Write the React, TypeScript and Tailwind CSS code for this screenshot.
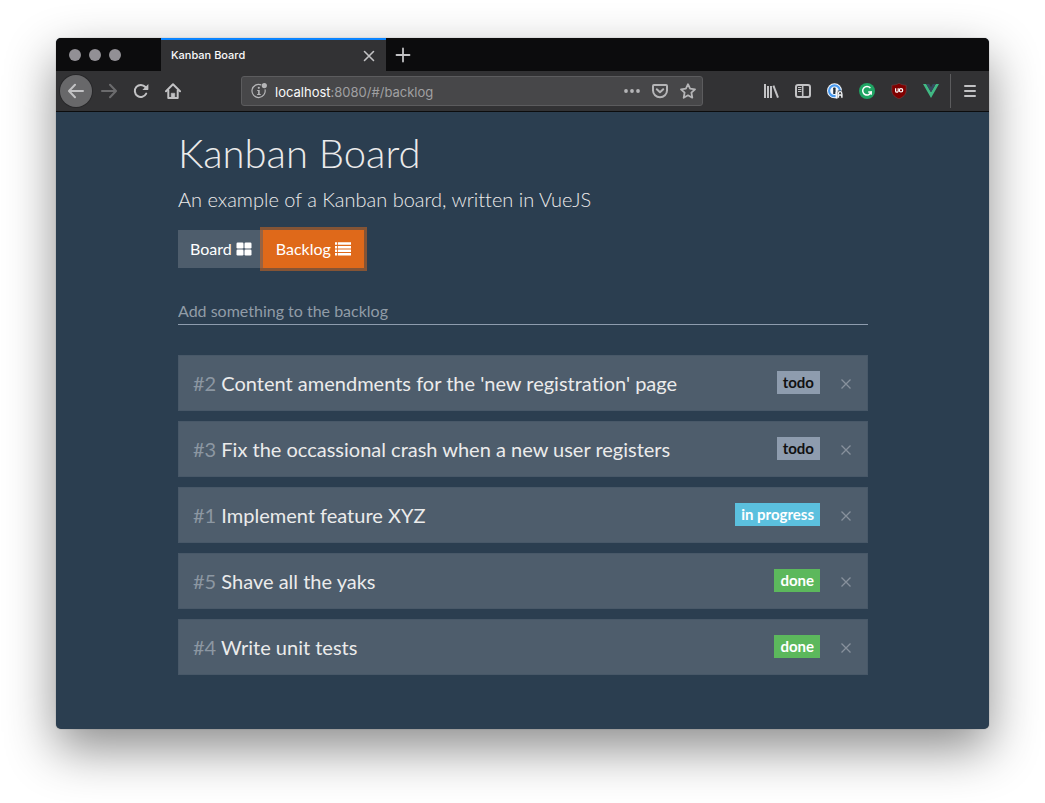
import { useState } from "react";
import type { FormEvent, ReactNode } from "react";

type Status = "todo" | "in progress" | "done";

interface Item {
  id: number;
  text: string;
  status: Status;
}

const initialItems: Item[] = [
  { id: 2, text: "Content amendments for the 'new registration' page", status: "todo" },
  { id: 3, text: "Fix the occassional crash when a new user registers", status: "todo" },
  { id: 1, text: "Implement feature XYZ", status: "in progress" },
  { id: 5, text: "Shave all the yaks", status: "done" },
  { id: 4, text: "Write unit tests", status: "done" },
];

const badgeStyles: Record<Status, string> = {
  todo: "bg-[#8e9cae] text-[#111111]",
  "in progress": "bg-[#5bc0de] text-white",
  done: "bg-[#5cb85c] text-white",
};

function ToolButton({ label, className = "", children }: { label: string; className?: string; children: ReactNode }) {
  return (
    <button
      type="button"
      aria-label={label}
      className={`flex size-8 shrink-0 items-center justify-center rounded-full text-[#c2c2c4] ${className}`}
    >
      {children}
    </button>
  );
}

function ArrowIcon({ flip = false }: { flip?: boolean }) {
  return (
    <svg className={flip ? "size-4 rotate-180" : "size-4"} viewBox="0 0 16 16" fill="none" stroke="currentColor" strokeWidth="2" strokeLinecap="round" strokeLinejoin="round">
      <path d="M15 8H1.5M7 1.8L1 8l6 6.2" />
    </svg>
  );
}

function ReloadIcon() {
  return (
    <svg className="size-4" viewBox="0 0 16 16">
      <path d="M13.2 10.6A6 6 0 1 1 12.4 4" fill="none" stroke="currentColor" strokeWidth="2" strokeLinecap="round" />
      <path d="M15.4 1v5.3a.7.7 0 0 1-.7.7H9.4z" fill="currentColor" />
    </svg>
  );
}

function HomeIcon() {
  return (
    <svg className="size-4" viewBox="0 0 16 16" fill="none" stroke="currentColor" strokeWidth="2" strokeLinecap="round" strokeLinejoin="round">
      <path d="M1 8.2L8 1.2l7 7" />
      <path d="M3.3 7.5V15h9.4V7.5" />
      <path d="M6.2 15v-4.8h3.6V15z" fill="currentColor" strokeWidth="0.5" />
    </svg>
  );
}

function InfoIcon() {
  return (
    <svg className="size-4 shrink-0 text-[#b5b5b7]" viewBox="0 0 16 16">
      <path d="M10.2 1.9A6.6 6.6 0 1 0 14 6.4" fill="none" stroke="currentColor" strokeWidth="1.2" />
      <circle cx="13.3" cy="2.6" r="2.6" fill="currentColor" />
      <circle cx="7.8" cy="4.8" r="1.1" fill="currentColor" />
      <path d="M6.2 7h2.5v4h1v1.1H6.1V11h1V8.1h-.9z" fill="currentColor" />
    </svg>
  );
}

function PocketIcon() {
  return (
    <svg className="size-4" viewBox="0 0 16 16" fill="none" stroke="currentColor" strokeWidth="2" strokeLinecap="round" strokeLinejoin="round">
      <path d="M2 2h12a1 1 0 0 1 1 1v4.5a7 6.7 0 0 1-14 0V3a1 1 0 0 1 1-1z" />
      <path d="M4.8 6.3L8 9.3l3.2-3" />
    </svg>
  );
}

function StarIcon() {
  return (
    <svg className="size-4" viewBox="0 0 16 16" fill="none" stroke="currentColor" strokeWidth="1.8" strokeLinejoin="round">
      <path d="M8 1.2l2.1 4.4 4.9.7-3.6 3.4.9 5L8 12.3l-4.3 2.4.9-5L1 6.3l4.9-.7z" />
    </svg>
  );
}

function LibraryIcon() {
  return (
    <svg className="size-4" viewBox="0 0 16 16" fill="none" stroke="currentColor" strokeWidth="2">
      <path d="M2 1v14M5 3v12M8 3v12" />
      <path d="M10.4 2.6L15 14.6" />
    </svg>
  );
}

function SidebarIcon() {
  return (
    <svg className="size-4" viewBox="0 0 16 16" fill="none" stroke="currentColor">
      <rect x="1" y="2" width="14" height="12" rx="2" strokeWidth="2" />
      <path d="M7.7 2v12" strokeWidth="1.6" />
      <path d="M3 4.500h3.400M3 6.500h3.400M3 8.500h3.400" strokeWidth="1" />
    </svg>
  );
}

function PasswordIcon() {
  return (
    <svg className="size-4" viewBox="0 0 16 16">
      <circle cx="7.5" cy="7.8" r="7.5" fill="#f4f6f8" />
      <circle cx="7.5" cy="7.8" r="5.400" fill="none" stroke="#4a9bf0" strokeWidth="2.200" />
      <rect x="6.200" y="4.600" width="2.400" height="6.400" rx="0.600" fill="#22303c" />
      <path d="M9.600 16V10l1.200-2.600H16V16z" fill="#38383a" />
      <path d="M8.600 9.200l2-1.400v7.600l-2 .4z" fill="#f4f6f8" />
      <path d="M11.400 11.500V10.400a1.700 1.700 0 0 1 3.400 0v1.100" fill="none" stroke="#f4f6f8" strokeWidth="1.300" />
      <path d="M10.600 11.200h5v3.600h-1.500v-2h-2v2h-1.500z" fill="#f4f6f8" />
    </svg>
  );
}

function GrammarIcon() {
  return (
    <svg className="size-4" viewBox="0 0 16 16">
      <circle cx="8" cy="8" r="8" fill="#1fa463" />
      <path d="M11.4 5.1A4.3 4.3 0 1 0 12.1 9H9.2" fill="none" stroke="#ffffff" strokeWidth="1.5" />
      <path d="M12.3 8.5v3.3" stroke="#ffffff" strokeWidth="1.2" />
    </svg>
  );
}

function ShieldIcon() {
  return (
    <svg className="size-4" viewBox="0 0 16 16">
      <path d="M8 .2c2 1.400 4.400 1.800 7.200 2v5.500c0 3.900-3.200 6.400-7.200 8.200-4-1.800-7.200-4.300-7.200-8.200V2.200C3.600 2 6 1.600 8 .2z" fill="#800000" stroke="#6b4a4c" strokeWidth="0.6" />
      <path d="M4.600 5.300v2.600a1.300 1.300 0 0 0 2.600 0V5.300" fill="none" stroke="#ffffff" strokeWidth="1.200" />
      <circle cx="10" cy="7.300" r="1.700" fill="none" stroke="#ffffff" strokeWidth="1.200" />
    </svg>
  );
}

function VueIcon() {
  return (
    <svg className="size-4" viewBox="0 0 16 16">
      <path d="M0 1h3.200L8 9.300 12.800 1H16L8 14.900z" fill="#41b883" />
      <path d="M3.200 1h3L8 4.200 9.800 1h3L8 9.300z" fill="#35495e" />
    </svg>
  );
}

function GridIcon() {
  return (
    <svg className="h-[14px] w-4" viewBox="0 0 16 14" fill="currentColor">
      <rect x="0.500" y="0.500" width="7" height="6" rx="1.200" />
      <rect x="8.500" y="0.500" width="7" height="6" rx="1.200" />
      <rect x="0.500" y="7.500" width="7" height="6" rx="1.200" />
      <rect x="8.500" y="7.500" width="7" height="6" rx="1.200" />
    </svg>
  );
}

function ListIcon() {
  return (
    <svg className="h-[14px] w-4" viewBox="0 0 16 14" fill="currentColor">
      <path d="M0 .3h2.200v2.500H0zM0 3.900h2.200v2.500H0zM0 7.500h2.200V10H0zM0 11.100h2.200v2.500H0zM3 .3h13v2.500H3zM3 3.900h13v2.500H3zM3 7.500h13V10H3zM3 11.100h13v2.500H3z" />
    </svg>
  );
}

function TabStrip() {
  return (
    <div className="flex h-[33px] bg-[#0c0c0d]">
      <div className="flex w-[105px] shrink-0 items-center gap-2 pl-[13px]">
        <span className="size-3 rounded-full bg-[#929095]" />
        <span className="size-3 rounded-full bg-[#929095]" />
        <span className="size-3 rounded-full bg-[#929095]" />
      </div>
      <div className="flex w-[225px] items-center justify-between border-t-2 border-[#0a84ff] bg-[#323234] pr-[11px] pl-[10px] text-[11px] font-medium text-[#f9f9fa]">
        <span>Kanban Board</span>
        <button type="button" aria-label="Close tab" className="text-[#c2c2c4]">
          <svg className="size-3" viewBox="0 0 12 12" stroke="currentColor" strokeWidth="1.600" strokeLinecap="round">
            <path d="M1.500 1.500l9 9M10.500 1.500l-9 9" />
          </svg>
        </button>
      </div>
      <button type="button" aria-label="New tab" className="flex w-[34px] items-center justify-center text-[#c2c2c4]">
        <svg className="size-4" viewBox="0 0 16 16" stroke="currentColor" strokeWidth="1.800" strokeLinecap="round">
          <path d="M8 1.500v13M1.500 8h13" />
        </svg>
      </button>
    </div>
  );
}

function Toolbar() {
  return (
    <div className="flex h-[41px] items-center border-b border-[#0c0c0d] bg-[#323234] pr-[3px] pl-1">
      <ToolButton label="Back" className="mr-px bg-[#68686a] ring-1 ring-[#28282a]">
        <ArrowIcon />
      </ToolButton>
      <ToolButton label="Forward" className="opacity-40">
        <ArrowIcon flip />
      </ToolButton>
      <ToolButton label="Reload">
        <ReloadIcon />
      </ToolButton>
      <ToolButton label="Home">
        <HomeIcon />
      </ToolButton>
      <div className="flex-[52]" />
      <div className="flex h-[30px] flex-[445] items-center rounded-[3px] border border-[#5c5c5e] bg-[#474749] pr-[6px] pl-[9px] text-[13px] text-[#a0a0a2]">
        <InfoIcon />
        <span className="ml-2 flex-1 pt-1 whitespace-nowrap">
          <span className="text-[#f9f9fa]">localhost</span>:8080/#/backlog
        </span>
        <div className="flex gap-3 text-[#b5b5b7]">
          <button type="button" aria-label="Page actions">
            <svg className="size-4" viewBox="0 0 16 16" fill="currentColor">
              <circle cx="2" cy="8" r="1.900" />
              <circle cx="8" cy="8" r="1.900" />
              <circle cx="14" cy="8" r="1.900" />
            </svg>
          </button>
          <button type="button" aria-label="Save to Pocket">
            <PocketIcon />
          </button>
          <button type="button" aria-label="Bookmark this page">
            <StarIcon />
          </button>
        </div>
      </div>
      <div className="flex-[52]" />
      <ToolButton label="Library">
        <LibraryIcon />
      </ToolButton>
      <ToolButton label="Sidebars">
        <SidebarIcon />
      </ToolButton>
      <ToolButton label="Passwords">
        <PasswordIcon />
      </ToolButton>
      <ToolButton label="Grammar checker">
        <GrammarIcon />
      </ToolButton>
      <ToolButton label="Content blocker">
        <ShieldIcon />
      </ToolButton>
      <ToolButton label="Vue devtools">
        <VueIcon />
      </ToolButton>
      <div className="mx-[3px] h-[34px] w-px bg-[#5c5c5e]" />
      <ToolButton label="Menu">
        <svg className="size-4" viewBox="0 0 16 16" stroke="currentColor" strokeWidth="2" strokeLinecap="round">
          <path d="M3 3h10M3 8h10M3 13h10" />
        </svg>
      </ToolButton>
    </div>
  );
}

function ItemCard({ item, onRemove }: { item: Item; onRemove: () => void }) {
  return (
    <li className="flex h-14 items-center border border-[#485868] bg-[#4e5d6c] pr-[15px] pl-[14px]">
      <span className="flex-1 text-xl text-[#ebebeb]">
        <span className="text-[#8c97a2]">#{item.id}</span> {item.text}
      </span>
      <span className={`mb-[2px] px-[6px] text-[15px] leading-[23px] font-bold ${badgeStyles[item.status]}`}>
        {item.status}
      </span>
      <button type="button" aria-label={`Remove item ${item.id}`} onClick={onRemove} className="ml-5 pt-[2px] text-[#87919c]">
        <svg className="size-3" viewBox="0 0 12 12" stroke="currentColor" strokeWidth="1.300">
          <path d="M1.500 1.500l9 9M10.500 1.500l-9 9" />
        </svg>
      </button>
    </li>
  );
}

export default function App() {
  const [items, setItems] = useState<Item[]>(initialItems);
  const [draft, setDraft] = useState("");

  const addItem = (event: FormEvent) => {
    event.preventDefault();
    const text = draft.trim();
    if (!text) return;
    const id = Math.max(0, ...items.map((item) => item.id)) + 1;
    setItems([...items, { id, text, status: "todo" }]);
    setDraft("");
  };

  return (
    <div className="flex min-h-screen flex-col bg-white px-14 pt-[38px] pb-[74px]">
      <div className="flex flex-1 flex-col overflow-hidden rounded-[5px] bg-[#2b3e50] font-['Inter',sans-serif] shadow-[0_0_1px_rgba(0,0,0,0.5),0_20px_50px_rgba(0,0,0,0.45)]">
        <TabStrip />
        <Toolbar />
        <main className="mx-auto w-full max-w-[691px] pt-[17px] pb-[54px] pl-px font-['Lato',sans-serif] text-[#ebebeb] [font-variant-ligatures:none]">
          <h1 className="text-[40px] leading-[48px] font-light">Kanban Board</h1>
          <p className="mt-[7px] text-xl leading-[30px] font-light">An example of a Kanban board, written in VueJS</p>
          <nav className="mt-4 flex text-base leading-[38px] text-white">
            <a href="#/" className="flex items-center gap-1 bg-[#4e5d6c] pr-[11px] pl-3">
              Board <GridIcon />
            </a>
            <a href="#/backlog" aria-current="page" className="flex items-center gap-1 bg-[#df691a] px-[13px] ring-3 ring-[#df691a]/50">
              Backlog <ListIcon />
            </a>
          </nav>
          <form onSubmit={addItem} className="mt-[30px]">
            <input
              type="text"
              aria-label="Add something to the backlog"
              placeholder="Add something to the backlog"
              value={draft}
              onChange={(event) => setDraft(event.target.value)}
              className="block h-[27px] w-full border-b border-[#8e9cae] bg-transparent pb-[2px] text-base outline-none placeholder:text-[#919ca7]"
            />
          </form>
          <ul className="mt-[30px] flex flex-col gap-[10px]">
            {items.map((item) => (
              <ItemCard key={item.id} item={item} onRemove={() => setItems(items.filter((other) => other.id !== item.id))} />
            ))}
          </ul>
        </main>
      </div>
    </div>
  );
}
